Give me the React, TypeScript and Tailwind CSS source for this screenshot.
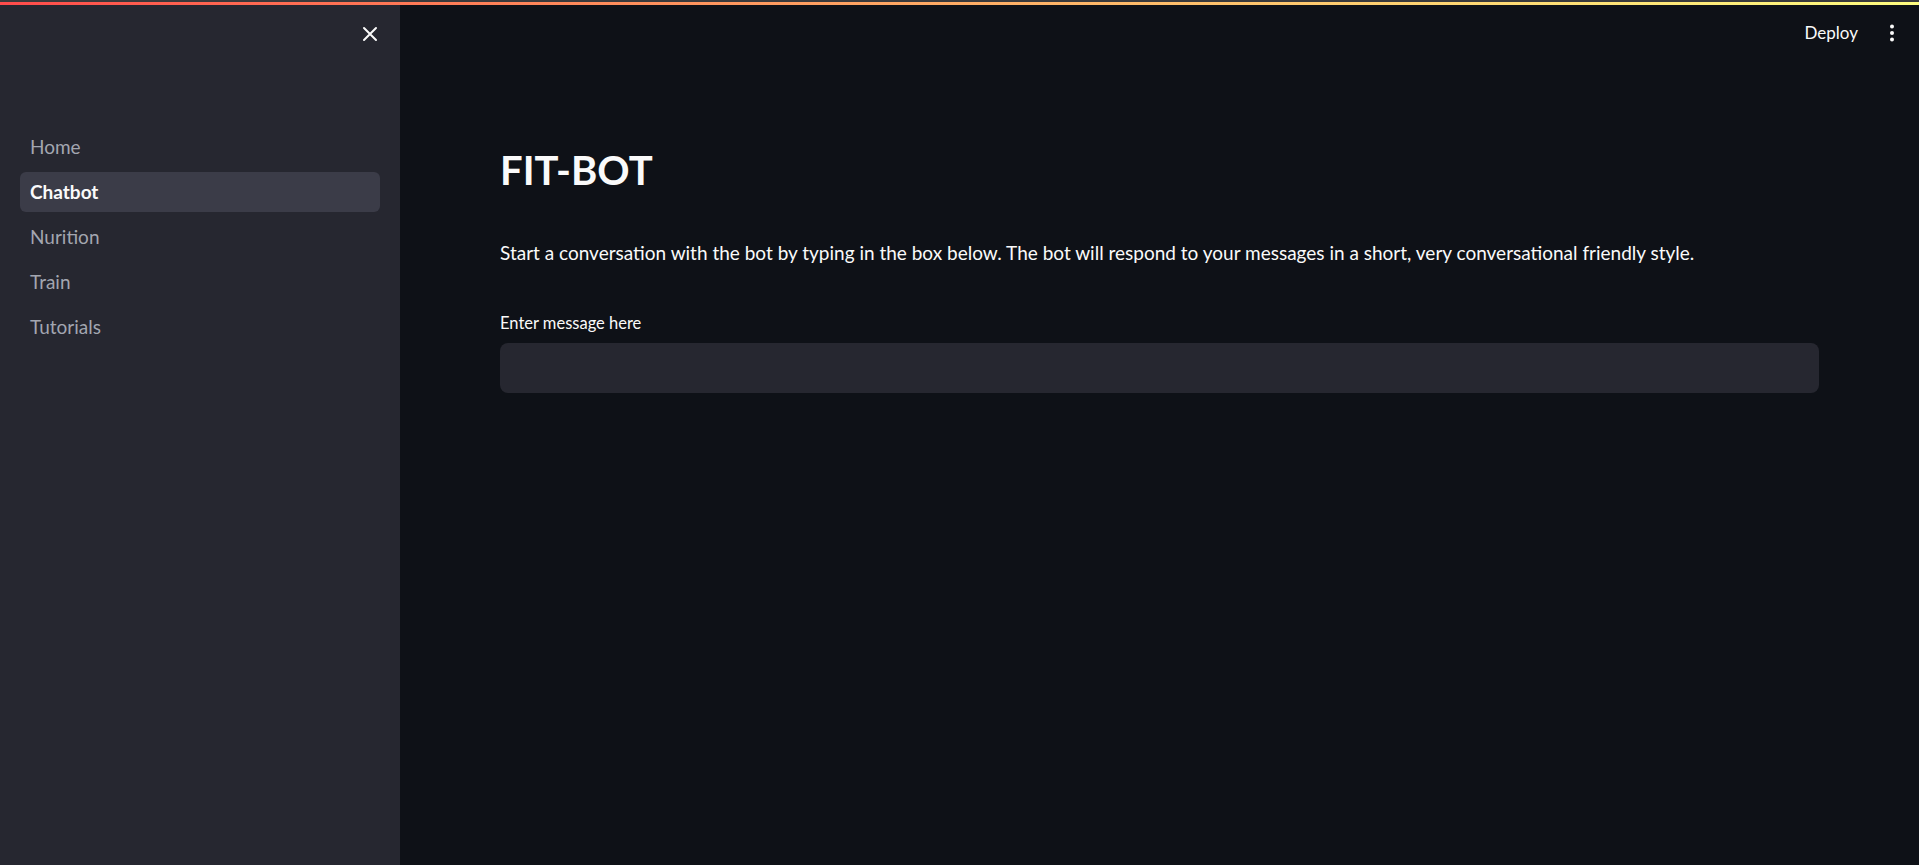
import React from 'react';

const pages = ['Home', 'Chatbot', 'Nurition', 'Train', 'Tutorials'];

function CloseIcon() {
  return (
    <svg width="16" height="16" viewBox="0 0 16 16" fill="none" stroke="#fafafa" strokeWidth="2" strokeLinecap="round">
      <path d="M2 2 L14 14 M14 2 L2 14" />
    </svg>
  );
}

function KebabIcon() {
  return (
    <svg width="6" height="18" viewBox="0 0 6 18" fill="#fafafa">
      <circle cx="3" cy="2.5" r="2" />
      <circle cx="3" cy="9" r="2" />
      <circle cx="3" cy="15.5" r="2" />
    </svg>
  );
}

export default function App() {
  const active = 'Chatbot';

  return (
    <div
      className="h-[865px] w-full flex flex-col bg-[#0e1117] text-[#fafafa] overflow-hidden"
      style={{ fontFamily: 'Lato, "Noto Sans", sans-serif' }}
    >
      {/* streamlit decoration bar */}
      <div className="h-[2px] bg-[#3a3a3c]" />
      <div className="h-[3px] bg-gradient-to-r from-[#ff4b4b] to-[#fffd80]" />

      <div className="flex flex-1 min-h-0">
        <aside className="w-[400px] shrink-0 bg-[#262730] flex flex-col">
          <div className="h-[58px] flex items-center justify-end pr-[14px]">
            <button className="flex items-center justify-center w-8 h-8">
              <CloseIcon />
            </button>
          </div>

          <nav className="mt-[64px] px-5 flex flex-col gap-[5px]">
            {pages.map((p) => (
              <a
                key={p}
                className={
                  p === active
                    ? 'h-10 flex items-center pl-[10px] rounded-md bg-[#3b3c48] text-[#fafafa] font-bold text-[19px]'
                    : 'h-10 flex items-center pl-[10px] rounded-md text-[#a3a6b0] text-[19px]'
                }
              >
                {p}
              </a>
            ))}
          </nav>
        </aside>

        <main className="flex-1 flex flex-col min-w-0">
          <header className="h-[56px] flex items-center justify-end gap-[31px] pr-[24px]">
            <span className="text-[17px]">Deploy</span>
            <KebabIcon />
          </header>

          <div className="px-[100px] flex flex-col">
            <h1 className="mt-[79px] h-[60px] flex items-center text-[40px] font-bold">FIT-BOT</h1>
            <p className="mt-[38px] h-[30px] flex items-center text-[19px] whitespace-nowrap">
              Start a conversation with the bot by typing in the box below. The bot will respond to your messages in a short, very conversational friendly style.
            </p>
            <label className="mt-[44px] h-[22px] flex items-center text-[16.5px]">Enter message here</label>
            <div className="mt-[9px] h-[50px] w-full rounded-lg bg-[#262730]" />
          </div>
        </main>
      </div>
    </div>
  );
}
